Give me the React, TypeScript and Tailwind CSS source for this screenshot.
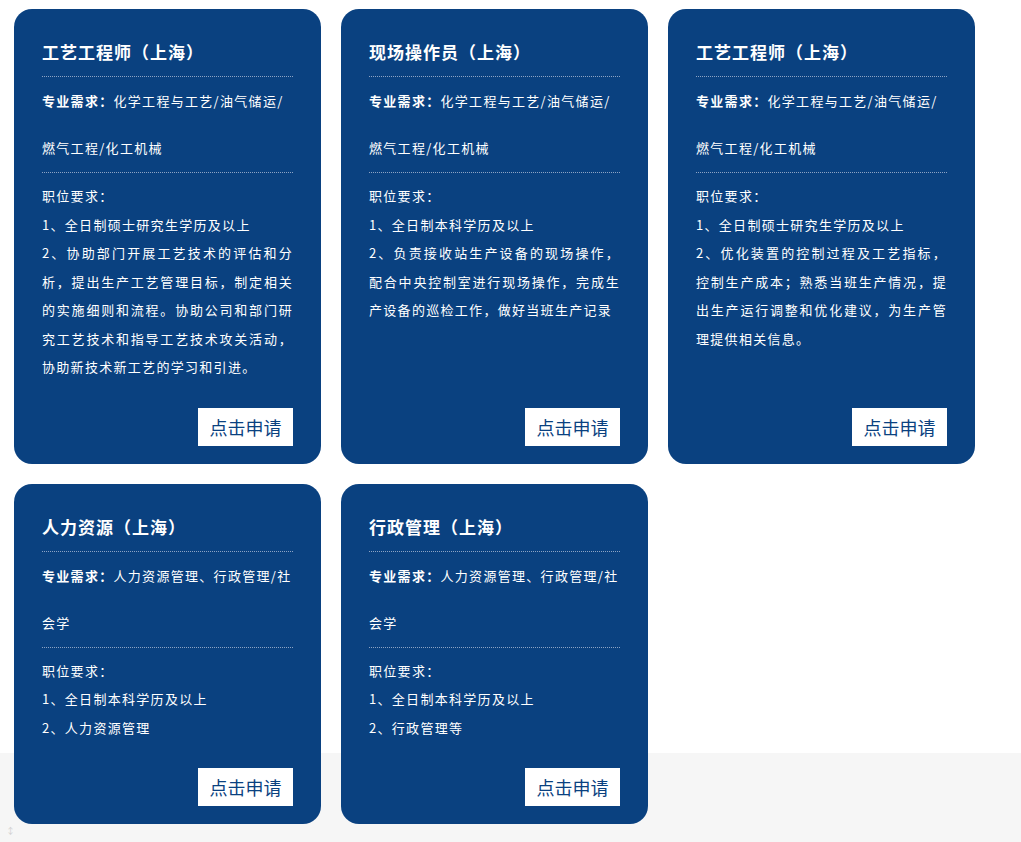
const jobs = [
  {
    title: "工艺工程师（上海）",
    major: "化学工程与工艺/油气储运/燃气工程/化工机械",
    reqs: [
      "1、全日制硕士研究生学历及以上",
      "2、协助部门开展工艺技术的评估和分析，提出生产工艺管理目标，制定相关的实施细则和流程。协助公司和部门研究工艺技术和指导工艺技术攻关活动，协助新技术新工艺的学习和引进。",
    ],
  },
  {
    title: "现场操作员（上海）",
    major: "化学工程与工艺/油气储运/燃气工程/化工机械",
    reqs: [
      "1、全日制本科学历及以上",
      "2、负责接收站生产设备的现场操作，配合中央控制室进行现场操作，完成生产设备的巡检工作，做好当班生产记录",
    ],
  },
  {
    title: "工艺工程师（上海）",
    major: "化学工程与工艺/油气储运/燃气工程/化工机械",
    reqs: [
      "1、全日制硕士研究生学历及以上",
      "2、优化装置的控制过程及工艺指标，控制生产成本；熟悉当班生产情况，提出生产运行调整和优化建议，为生产管理提供相关信息。",
    ],
  },
  {
    title: "人力资源（上海）",
    major: "人力资源管理、行政管理/社会学",
    reqs: ["1、全日制本科学历及以上", "2、人力资源管理"],
  },
  {
    title: "行政管理（上海）",
    major: "人力资源管理、行政管理/社会学",
    reqs: ["1、全日制本科学历及以上", "2、行政管理等"],
  },
];

function JobCard({ job }: { job: (typeof jobs)[number] }) {
  return (
    <div className="flex flex-col bg-[#0a4180] rounded-[18px] px-[28px] pt-[28px] pb-[18px] text-white">
      <h3 className="text-[17px] font-bold leading-[30px] pb-[9px] border-b border-dotted border-[#8da3c4] tracking-[1px]">
        {job.title}
      </h3>
      <p className="text-[13px] leading-[47px] tracking-[1.3px] border-b border-dotted border-[#8da3c4] pb-[1px]">
        <strong className="font-bold">专业需求：</strong>
        <span>{job.major}</span>
      </p>
      <div className="mt-[9px] text-[13px] leading-[28.5px] tracking-[1.3px] text-justify">
        <p>职位要求：</p>
        {job.reqs.map((r, i) => (
          <p key={i}>{r}</p>
        ))}
      </div>
      <div className="mt-auto pt-[26px] flex justify-end">
        <button className="bg-white text-[#0a4180] text-[18px] h-[38px] w-[95px] leading-[38px]">
          点击申请
        </button>
      </div>
    </div>
  );
}

export default function App() {
  return (
    <div
      className="min-h-[842px] bg-[linear-gradient(to_bottom,#ffffff_753px,#f6f6f6_753px)]"
      style={{ fontFamily: '"Microsoft YaHei", "Noto Sans CJK SC", "Liberation Sans", sans-serif' }}
    >
      <div className="pt-[9px] pl-[14px] grid grid-cols-[repeat(3,307px)] gap-x-[20px] gap-y-[20px]">
        {jobs.map((j, i) => (
          <JobCard key={i} job={j} />
        ))}
      </div>
      <div className="pl-[6px] pt-[2px] text-[9px] text-[#d0d0d0] leading-none">↕</div>
    </div>
  );
}
